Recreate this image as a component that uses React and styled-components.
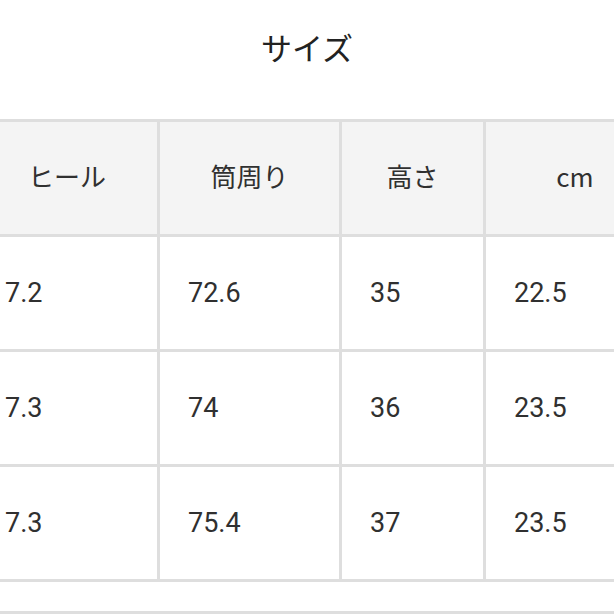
import styled, { createGlobalStyle } from "styled-components";

const GlobalStyle = createGlobalStyle`
    html, body {
        margin: 0;
        padding: 0;
        background: #fff;
        overflow: hidden;
    }
    body {
        font-family: "Noto Sans CJK JP", "Noto Sans", sans-serif;
        color: #2b2b2b;
    }
`;

const Page = styled.div`
    width: 614px;
    height: 614px;
    overflow: hidden;
`;

const Title = styled.h2`
    margin: 0;
    padding-top: 27px;
    height: 40px;
    line-height: 40px;
    margin-bottom: 52px;
    text-align: center;
    font-size: 31px;
    font-weight: 400;
    color: #222;
`;

const Table = styled.div`
    display: grid;
    grid-template-columns: 180px 179px 141px 178px;
    grid-auto-rows: 112px;
    gap: 3px;
    padding: 3px;
    margin-left: -26px;
    width: max-content;
    background: #dedede;
`;

const Cell = styled.div`
    display: flex;
    align-items: center;
    justify-content: ${props => props.head ? 'center' : 'flex-start'};
    padding-left: ${props => props.head ? '0' : '28px'};
    padding-bottom: ${props => props.head ? '5px' : '0'};
    background: ${props => props.head ? '#f4f4f4' : '#fff'};
    font-family: ${props => props.head
        ? '"Noto Sans CJK JP", "Noto Sans", sans-serif'
        : 'Roboto, "Liberation Sans", sans-serif'};
    font-size: ${props => props.head ? '26px' : '27px'};
    color: #303030;
`;

const FootRow = styled.div`
    grid-column: 1 / -1;
    height: 29px;
    background: #fff;
    align-self: start;
`;

const headers = ['ヒール', '筒周り', '高さ', 'cm'];

const rows = [
    ['7.2', '72.6', '35', '22.5'],
    ['7.3', '74', '36', '23.5'],
    ['7.3', '75.4', '37', '23.5'],
];

const App = () => {
    return (
        <>
            <GlobalStyle />
            <Page>
                <Title>サイズ</Title>
                <Table>
                    {headers.map(h => (
                        <Cell head key={h}>{h}</Cell>
                    ))}
                    {rows.map((r, i) => r.map((v, j) => (
                        <Cell key={`${i}-${j}`}>{v}</Cell>
                    )))}
                    <FootRow />
                </Table>
            </Page>
        </>
    );
}

export default App;
